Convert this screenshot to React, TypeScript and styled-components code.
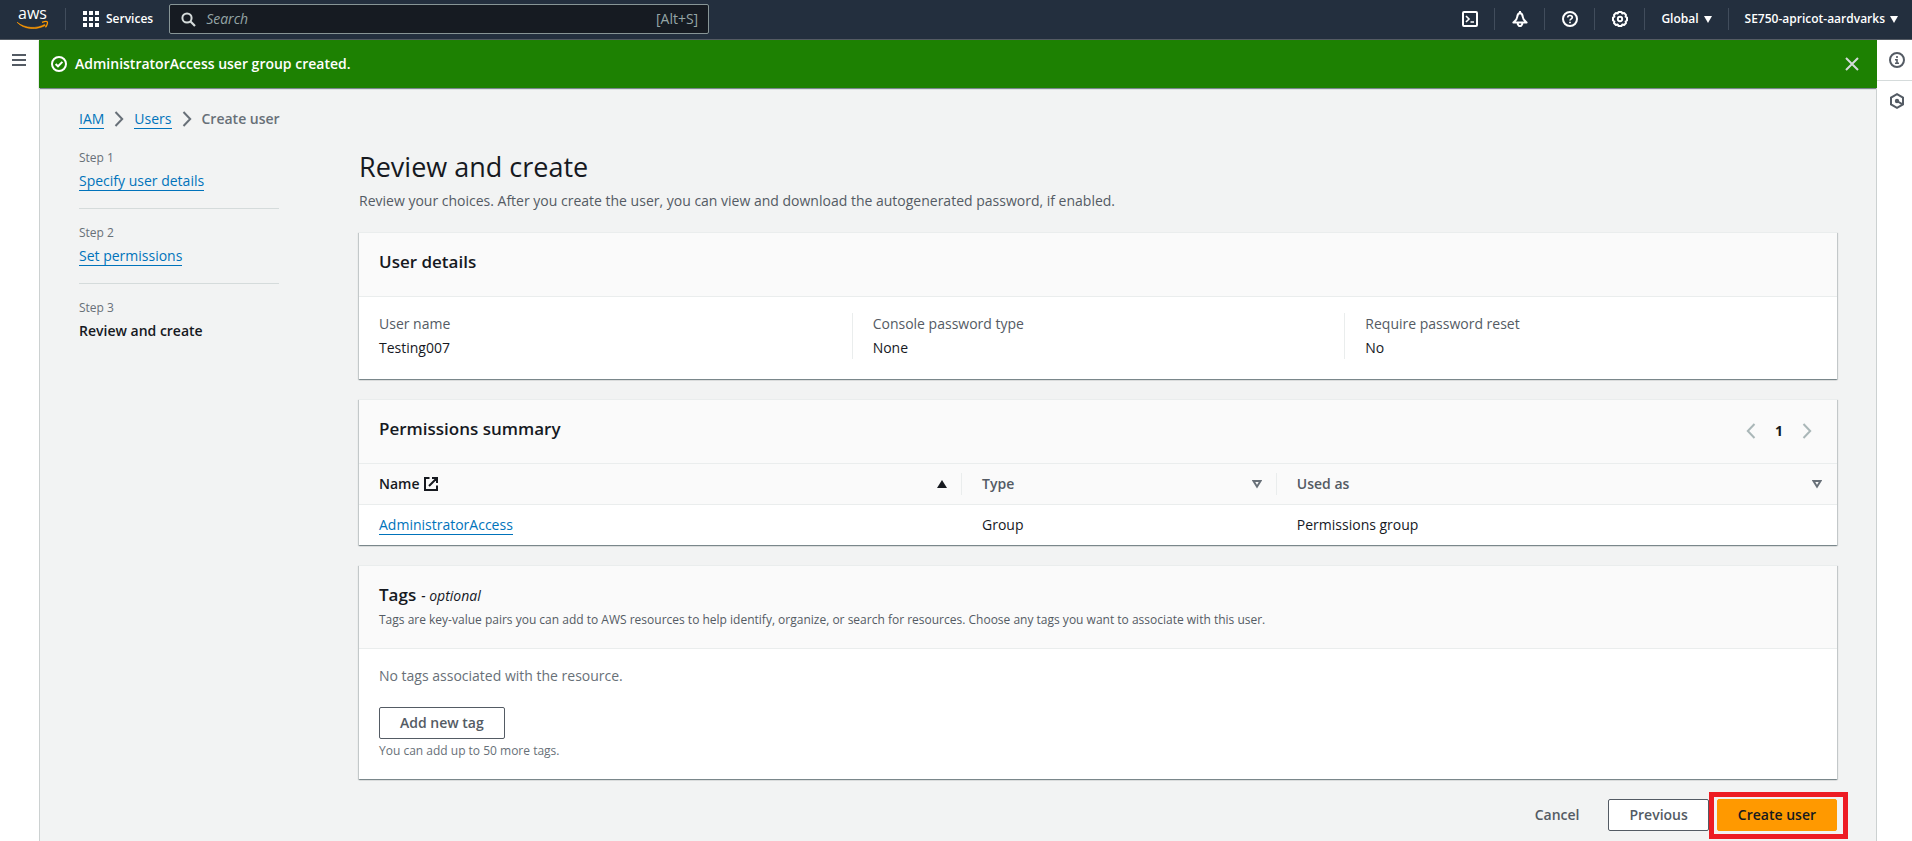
import React from "react";
import styled, { createGlobalStyle, css } from "styled-components";

const GlobalStyle = createGlobalStyle`
  *, *::before, *::after { box-sizing: border-box; }
  body {
    margin: 0;
    background: #f2f3f3;
    color: #16191f;
    font-family: "Open Sans", "Noto Sans", sans-serif;
    font-size: 14px;
    line-height: 22px;
  }
  button, input { font: inherit; color: inherit; }
  h1, h2, p, ol, dl, dd { margin: 0; padding: 0; }
  svg { display: block; flex: none; }
`;

const Page = styled.div`
  min-height: 100vh;
  display: flex;
  flex-direction: column;
`;

/* ---------- Global navigation ---------- */

const TopBar = styled.header`
  display: flex;
  align-items: center;
  height: 40px;
  padding: 0 0 1px 16px;
  background: #232f3e;
  border-bottom: 1px solid #545b64;
  color: #fff;
`;

const Separator = styled.span`
  width: 1px;
  height: 22px;
  background: #414d5c;
`;

const LogoLink = styled.a`
  width: 49px;
`;

const BarButton = styled.button`
  display: flex;
  align-items: center;
  gap: 7px;
  height: 38px;
  padding: 0 16px 0 17px;
  border: 0;
  background: none;
  color: #fff;
  font-size: 12px;
  font-weight: 600;
  white-space: nowrap;
  cursor: pointer;
`;

const CaretButton = styled(BarButton)<{ $last?: boolean }>`
  gap: 5px;
  padding: 0 ${(p) => (p.$last ? 14 : 16)}px 0 16px;
`;

const SearchBox = styled.label`
  display: flex;
  align-items: center;
  flex: 0 1 540px;
  gap: 10px;
  height: 30px;
  padding: 0 10px 0 11px;
  background: #161b22;
  border: 1px solid #879596;
  border-radius: 2px;
  color: #95a5a6;
`;

const SearchInput = styled.input`
  flex: 1;
  min-width: 0;
  padding: 0;
  border: 0;
  outline: 0;
  background: none;
  &::placeholder {
    color: #95a5a6;
    font-style: italic;
    opacity: 1;
  }
`;

const BarTools = styled.nav`
  display: flex;
  align-items: center;
  margin-left: auto;
`;

/* ---------- Shell ---------- */

const Shell = styled.div`
  flex: 1;
  display: grid;
  grid-template-columns: 39px minmax(0, 1fr) 35px;
`;

const Rail = styled.aside`
  display: flex;
  flex-direction: column;
  background: #fff;
`;

const RailButton = styled.button<{ $divided?: boolean; $tools?: boolean }>`
  display: flex;
  align-items: center;
  justify-content: center;
  height: ${(p) => (p.$divided ? 41 : 40)}px;
  padding: ${(p) => (p.$tools ? "0 0 0 4px" : "0 1px 0 0")};
  border: 0;
  ${(p) => p.$divided && css`border-bottom: 1px solid #d5dbdb;`}
  background: none;
  color: #545b64;
  cursor: pointer;
`;

const Main = styled.main`
  display: flex;
  flex-direction: column;
`;

const Flash = styled.div`
  display: flex;
  align-items: center;
  gap: 8px;
  height: 48px;
  padding: 0 13px 0 12px;
  background: #1d8102;
  box-shadow: 0 1px 1px 0 rgba(0, 28, 36, 0.5);
  color: #fff;
  font-weight: 600;
`;

const FlashClose = styled.button`
  margin-left: auto;
  padding: 5px;
  border: 0;
  background: none;
  color: #d5dbdb;
  cursor: pointer;
`;

const Content = styled.div`
  flex: 1;
  padding: 20px 39px 10px;
  border: solid #ccd1d1;
  border-width: 0 1px;
`;

const TextLink = styled.a`
  color: #0073bb;
  text-decoration: none;
  display: inline-block;
  line-height: 18px;
  border-bottom: 1px solid #0073bb;
`;

const Breadcrumbs = styled.nav`
  display: flex;
  align-items: center;
  gap: 10px;
  height: 22px;
  margin-bottom: 20px;
  color: #687078;
`;

const CurrentCrumb = styled.span`
  font-weight: 600;
`;

const Wizard = styled.div`
  display: grid;
  grid-template-columns: 200px minmax(0, 1fr);
  column-gap: 80px;
  align-items: start;
`;

const Steps = styled.ol`
  list-style: none;
`;

const Step = styled.li`
  display: flex;
  flex-direction: column;
  align-items: flex-start;
  gap: 4px;
  padding-bottom: 16px;
  & + & {
    border-top: 1px solid #d5dbdb;
    padding-top: 16px;
  }
`;

const SmallText = styled.p`
  color: #687078;
  font-size: 12px;
  line-height: 16px;
`;

const StepName = styled.div<{ $current?: boolean }>`
  height: 22px;
  font-weight: ${(p) => (p.$current ? 600 : 400)};
`;

const Stack = styled.div`
  display: flex;
  flex-direction: column;
  gap: 20px;
`;

const Title = styled.h1`
  margin-bottom: 6px;
  font-size: 27px;
  font-weight: 400;
  line-height: 34px;
`;

const Muted = styled.p`
  color: #545b64;
`;

/* ---------- Cards ---------- */

const Card = styled.section`
  background: #fff;
  border-top: 1px solid #eaeded;
  box-shadow: 0 1px 1px 0 rgba(0, 28, 36, 0.3), 1px 1px 1px 0 rgba(0, 28, 36, 0.15),
    -1px 1px 1px 0 rgba(0, 28, 36, 0.15);
`;

const CardHeader = styled.header`
  display: flex;
  justify-content: space-between;
  min-height: 64px;
  padding: 18px 20px 20px;
  background: #fafafa;
  border-bottom: 1px solid #eaeded;
`;

const CardTitle = styled.h2`
  display: flex;
  align-items: baseline;
  gap: 5px;
  height: 22px;
  font-size: 17px;
  font-weight: 600;
  line-height: 22px;
`;

const Optional = styled.i`
  font-size: 14px;
  font-weight: 400;
`;

const TagsIntro = styled(SmallText)`
  margin-top: 6px;
  color: #545b64;
`;

const Details = styled.dl`
  display: grid;
  grid-template-columns: repeat(3, minmax(0, 1fr));
  padding: 16px 0 20px;
`;

const Detail = styled.div`
  display: flex;
  flex-direction: column;
  gap: 2px;
  padding: 0 20px;
  & + & {
    border-left: 1px solid #eaeded;
  }
`;

const DetailLabel = styled.dt`
  color: #545b64;
`;

const Pager = styled.nav`
  display: flex;
  align-items: center;
  height: 25px;
  margin-right: -4px;
`;

const PagerButton = styled.button<{ $current?: boolean }>`
  display: flex;
  justify-content: center;
  width: 28px;
  padding: 0;
  border: 0;
  background: none;
  color: ${(p) => (p.$current ? "#16191f" : "#aab7b8")};
  font-weight: 700;
  cursor: pointer;
`;

const Table = styled.table`
  width: 100%;
  table-layout: fixed;
  border-collapse: separate;
  border-spacing: 0;
`;

const Col = styled.col<{ $width: string }>`
  width: ${(p) => p.$width};
`;

const HeadCell = styled.th<{ $active?: boolean }>`
  height: 41px;
  padding: 0;
  background: #fafafa;
  border-bottom: 1px solid #eaeded;
  color: ${(p) => (p.$active ? "#16191f" : "#545b64")};
  font-weight: 600;
  text-align: left;
`;

const HeadInner = styled.div<{ $last?: boolean }>`
  display: flex;
  align-items: center;
  gap: 4px;
  height: 22px;
  padding: 0 14px 0 20px;
  border-right: 1px solid ${(p) => (p.$last ? "transparent" : "#eaeded")};
`;

const SortButton = styled.button`
  margin-left: auto;
  padding: 0;
  border: 0;
  background: none;
  cursor: pointer;
`;

const Cell = styled.td`
  height: 40px;
  padding: 0 20px;
`;

const TagsBody = styled.div`
  display: flex;
  flex-direction: column;
  align-items: flex-start;
  padding: 16px 20px 20px;
`;

const TagsEmpty = styled.p`
  margin-bottom: 20px;
  color: #687078;
`;

const Button = styled.button<{ $variant?: "primary" | "link" }>`
  height: 32px;
  padding: 0 20px;
  border: 1px solid #545b64;
  border-radius: 2px;
  background: #fff;
  color: #545b64;
  font-weight: 600;
  line-height: 20px;
  white-space: nowrap;
  cursor: pointer;
  ${(p) =>
    p.$variant === "primary" &&
    css`
      border-color: #ff9900;
      background: #ff9900;
      color: #16191f;
    `}
  ${(p) =>
    p.$variant === "link" &&
    css`
      border-color: transparent;
      background: none;
    `}
`;

const TagsHint = styled(SmallText)`
  margin-top: 4px;
`;

const Actions = styled.div`
  display: flex;
  justify-content: flex-end;
  gap: 8px;
`;

const Highlight = styled.div`
  position: relative;
  &::after {
    content: "";
    position: absolute;
    inset: -7px -11px -8px -8px;
    border: 5px solid #ed1c24;
    pointer-events: none;
  }
`;

/* ---------- Icons ---------- */

const stroke = { fill: "none", stroke: "currentColor", strokeWidth: 2 } as const;

const AwsLogo = () => (
  <svg width="33" height="34" viewBox="0 0 33 34" role="img" aria-label="AWS">
    <text x="2" y="17" fontSize="16" fontWeight="500" fill="#fff">aws</text>
    <g transform="translate(0 6)">
      <path d="M1 14.200C9 20.600 21 21 28.600 16.400L29.400 17.400C21 22.200 8 21.800 1 14.200Z" fill="#ff9900" stroke="#ff9900" strokeWidth=".6" />
      <path d="M26 14.400C28.500 13.300 31 13.300 31.400 14C31.800 14.900 30.800 17.800 29.400 19.200" fill="none" stroke="#ff9900" strokeWidth="1.300" />
    </g>
  </svg>
);

const GridIcon = () => (
  <svg width="16" height="16" viewBox="0 0 16 16" fill="currentColor">
    {[0, 6, 12].map((y) => [0, 6, 12].map((x) => <rect key={`${x}-${y}`} x={x} y={y} width="4" height="4" />))}
  </svg>
);

const SearchIcon = () => (
  <svg width="15" height="15" viewBox="0 0 15 15" fill="none" stroke="#d5dbdb" strokeWidth="2">
    <circle cx="6" cy="6" r="4.600" />
    <path d="M9.300 9.300L14 14" strokeWidth="2.200" />
  </svg>
);

const ShellIcon = () => (
  <svg width="16" height="16" viewBox="0 0 16 16" {...stroke}>
    <rect x="1" y="1" width="14" height="14" rx="1" />
    <path d="M4 5L7 8L4 11M8.500 11H12" strokeWidth="1.600" />
  </svg>
);

const BellIcon = () => (
  <svg width="16" height="16" viewBox="0 0 16 16" {...stroke} strokeLinejoin="round">
    <path d="M8 2C6.200 2.400 5.400 4 5.200 6C5 8.600 3.200 9.800 1.400 11.500H14.600C12.800 9.800 11 8.600 10.800 6C10.600 4 9.800 2.400 8 2Z" />
    <path d="M5.800 12V13.200L7 15H9L10.200 13.200V12" />
    <path d="M8 0V2" />
  </svg>
);

const HelpIcon = () => (
  <svg width="16" height="16" viewBox="0 0 16 16" {...stroke}>
    <circle cx="8" cy="8" r="7" />
    <path d="M5.700 6.600C5.700 5.100 6.700 4.500 8 4.500S10.300 5.200 10.300 6.400C10.300 7.900 8 7.800 8 9.600M8 10.700V12.300" strokeWidth="1.700" />
  </svg>
);

const GearIcon = () => (
  <svg width="16" height="16" viewBox="0 0 16 16" {...stroke} strokeLinejoin="round">
    <path d="M6.500 1H9.500L10.300 2.400L12.100 2L14 3.900L13.600 5.700L15 6.500V9.500L13.600 10.300L14 12.100L12.100 14L10.300 13.600L9.500 15H6.500L5.700 13.600L3.900 14L2 12.100L2.400 10.300L1 9.500V6.500L2.400 5.700L2 3.900L3.900 2L5.700 2.400Z" />
    <circle cx="8" cy="8" r="2.200" strokeWidth="1.900" />
  </svg>
);

const CaretIcon = () => (
  <svg width="8" height="8" viewBox="0 0 8 8" fill="currentColor">
    <path d="M0 1H8L4 8Z" />
  </svg>
);

const MenuIcon = () => (
  <svg width="14" height="12" viewBox="0 0 14 12" fill="currentColor">
    <path d="M0 0H14V2H0ZM0 5H14V7H0ZM0 10H14V12H0Z" />
  </svg>
);

const InfoIcon = () => (
  <svg width="16" height="16" viewBox="0 0 16 16" {...stroke}>
    <circle cx="8" cy="8" r="7" />
    <path d="M8 4V6M6 7.700H8V12M6 11.300H10" strokeWidth="1.600" />
  </svg>
);

const HexIcon = () => (
  <svg width="16" height="16" viewBox="0 0 16 16" {...stroke}>
    <path d="M8 1.200L14 4.600V11.400L8 14.800L2 11.400V4.600Z" />
    <circle cx="8" cy="8" r="2.200" fill="currentColor" stroke="none" />
    <path d="M8 8L13.500 11.300" />
  </svg>
);

const SuccessIcon = () => (
  <svg width="16" height="16" viewBox="0 0 16 16" {...stroke}>
    <circle cx="8" cy="8" r="7" />
    <path d="M4.600 8L7 10.300L11.400 5.900" />
  </svg>
);

const CloseIcon = () => (
  <svg width="14" height="14" viewBox="0 0 14 14" {...stroke}>
    <path d="M1 1L13 13M13 1L1 13" />
  </svg>
);

const Chevron = ({ back }: { back?: boolean }) => (
  <svg width="10" height="16" viewBox="0 0 10 16" {...stroke}>
    <path d={back ? "M8.500 1L1.800 8L8.500 15" : "M1.500 1L8.200 8L1.500 15"} />
  </svg>
);

const ExternalIcon = () => (
  <svg width="14" height="14" viewBox="0 0 14 14" {...stroke}>
    <path d="M5.500 1H1V13H13V8.500M8 1H13V6M13 1L5 9" />
  </svg>
);

const SortIcon = ({ ascending }: { ascending?: boolean }) => (
  <svg width="10" height="10" viewBox="0 0 10 10">
    {ascending ? (
      <path d="M5 1L10 9H0Z" fill="#16191f" />
    ) : (
      <path d="M1.500 2H8.500L5 7.700Z" fill="none" stroke="#687078" strokeWidth="2" />
    )}
  </svg>
);

/* ---------- Data ---------- */

const details = [
  { label: "User name", value: "Testing007" },
  { label: "Console password type", value: "None" },
  { label: "Require password reset", value: "No" },
];

const steps = [
  { name: "Specify user details" },
  { name: "Set permissions" },
  { name: "Review and create", current: true },
];

const tools = [
  { label: "CloudShell", icon: <ShellIcon /> },
  { label: "Notifications", icon: <BellIcon /> },
  { label: "Help", icon: <HelpIcon /> },
  { label: "Settings", icon: <GearIcon /> },
];

export default function App() {
  return (
    <Page>
      <GlobalStyle />
      <TopBar>
        <LogoLink href="#home"><AwsLogo /></LogoLink>
        <Separator />
        <BarButton type="button"><GridIcon />Services</BarButton>
        <SearchBox>
          <SearchIcon />
          <SearchInput type="text" placeholder="Search" aria-label="Search" />
          <span>[Alt+S]</span>
        </SearchBox>
        <BarTools aria-label="Account tools">
          {tools.map((t) => (
            <React.Fragment key={t.label}>
              <BarButton type="button" aria-label={t.label}>{t.icon}</BarButton>
              <Separator />
            </React.Fragment>
          ))}
          <CaretButton type="button">Global<CaretIcon /></CaretButton>
          <Separator />
          <CaretButton type="button" $last>SE750-apricot-aardvarks<CaretIcon /></CaretButton>
        </BarTools>
      </TopBar>

      <Shell>
        <Rail>
          <RailButton type="button" aria-label="Open navigation"><MenuIcon /></RailButton>
        </Rail>

        <Main>
          <Flash role="status">
            <SuccessIcon />
            <span>AdministratorAccess user group created.</span>
            <FlashClose type="button" aria-label="Dismiss"><CloseIcon /></FlashClose>
          </Flash>

          <Content>
            <Breadcrumbs aria-label="Breadcrumbs">
              <TextLink href="#iam">IAM</TextLink>
              <Chevron />
              <TextLink href="#users">Users</TextLink>
              <Chevron />
              <CurrentCrumb>Create user</CurrentCrumb>
            </Breadcrumbs>

            <Wizard>
              <Steps>
                {steps.map((s, i) => (
                  <Step key={s.name}>
                    <SmallText>Step {i + 1}</SmallText>
                    <StepName $current={s.current}>
                      {s.current ? s.name : <TextLink href={`#step-${i + 1}`}>{s.name}</TextLink>}
                    </StepName>
                  </Step>
                ))}
              </Steps>

              <Stack>
                <div>
                  <Title>Review and create</Title>
                  <Muted>
                    Review your choices. After you create the user, you can view and download the
                    autogenerated password, if enabled.
                  </Muted>
                </div>

                <Card>
                  <CardHeader><CardTitle>User details</CardTitle></CardHeader>
                  <Details>
                    {details.map((d) => (
                      <Detail key={d.label}>
                        <DetailLabel>{d.label}</DetailLabel>
                        <dd>{d.value}</dd>
                      </Detail>
                    ))}
                  </Details>
                </Card>

                <Card>
                  <CardHeader>
                    <CardTitle>Permissions summary</CardTitle>
                    <Pager aria-label="Pages">
                      <PagerButton type="button" aria-label="Previous page"><Chevron back /></PagerButton>
                      <PagerButton type="button" $current>1</PagerButton>
                      <PagerButton type="button" aria-label="Next page"><Chevron /></PagerButton>
                    </Pager>
                  </CardHeader>
                  <Table>
                    <colgroup>
                      <Col $width="40.8%" />
                      <Col $width="21.3%" />
                      <Col $width="auto" />
                    </colgroup>
                    <thead>
                      <tr>
                        <HeadCell scope="col" $active>
                          <HeadInner>
                            Name <ExternalIcon />
                            <SortButton type="button" aria-label="Sort by name"><SortIcon ascending /></SortButton>
                          </HeadInner>
                        </HeadCell>
                        <HeadCell scope="col">
                          <HeadInner>
                            Type
                            <SortButton type="button" aria-label="Sort by type"><SortIcon /></SortButton>
                          </HeadInner>
                        </HeadCell>
                        <HeadCell scope="col">
                          <HeadInner $last>
                            Used as
                            <SortButton type="button" aria-label="Sort by use"><SortIcon /></SortButton>
                          </HeadInner>
                        </HeadCell>
                      </tr>
                    </thead>
                    <tbody>
                      <tr>
                        <Cell><TextLink href="#group">AdministratorAccess</TextLink></Cell>
                        <Cell>Group</Cell>
                        <Cell>Permissions group</Cell>
                      </tr>
                    </tbody>
                  </Table>
                </Card>

                <Card>
                  <CardHeader>
                    <div>
                      <CardTitle>Tags <Optional>- optional</Optional></CardTitle>
                      <TagsIntro>
                        Tags are key-value pairs you can add to AWS resources to help identify, organize,
                        or search for resources. Choose any tags you want to associate with this user.
                      </TagsIntro>
                    </div>
                  </CardHeader>
                  <TagsBody>
                    <TagsEmpty>No tags associated with the resource.</TagsEmpty>
                    <Button type="button">Add new tag</Button>
                    <TagsHint>You can add up to 50 more tags.</TagsHint>
                  </TagsBody>
                </Card>

                <Actions>
                  <Button type="button" $variant="link">Cancel</Button>
                  <Button type="button">Previous</Button>
                  <Highlight>
                    <Button type="submit" $variant="primary">Create user</Button>
                  </Highlight>
                </Actions>
              </Stack>
            </Wizard>
          </Content>
        </Main>

        <Rail>
          <RailButton type="button" $divided $tools aria-label="Info"><InfoIcon /></RailButton>
          <RailButton type="button" $tools aria-label="Tutorials"><HexIcon /></RailButton>
        </Rail>
      </Shell>
    </Page>
  );
}
